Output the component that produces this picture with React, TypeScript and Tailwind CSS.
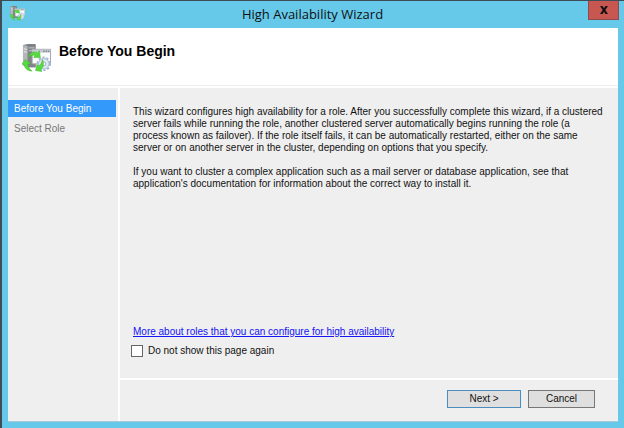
import React from "react";

function ClusterIcon({ className }: { className: string }) {
  return (
    <svg viewBox="0 0 30 30" className={className} aria-hidden="true">
      <path d="M1 1 6 0h8v24H6l-5-2z" fill="#7d8084" />
      <path d="M1 1l5 1v22l-5-2z" fill="#b4b7ba" />
      <path d="M6 2l8-1v23H6z" fill="#808387" />
      <path d="M7 4h6M7 7h6" stroke="#c9cccf" strokeWidth="1" />
      <path d="M2 5l3 .5M2 8l3 .5" stroke="#ebedee" strokeWidth="1" />
      <path d="M10.500 5.500h19v15h-19z" fill="#fbfcfd" stroke="#a2a6ab" />
      <path d="M11 6h18v3H11z" fill="#c6cbd2" />
      <path d="M22 7.500h1.500M24.500 7.500H26M27 7.500h1.200" stroke="#5c6570" />
      <circle cx="22.500" cy="20.500" r="6.500" fill="none" stroke="#a3b3c8" strokeWidth="2" strokeDasharray="2.200 1.880" />
      <circle cx="22.500" cy="20.500" r="5.500" fill="#dbe6f3" stroke="#a9bad0" />
      <circle cx="22.500" cy="20.500" r="2" fill="#fff" stroke="#9cadc2" />
      <path d="M6 14C8 9 12 7 16 9l2-2 1 7-7 0 1.500-2C11 11 9 11.500 6 14z" fill="#55dc3c" stroke="#3bb32b" strokeWidth=".5" />
      <path d="M0 21 3.500 16 9 20.500l-3 .2c.2 3 1.500 5 4.500 7.300-5 0-8-3-8.300-7z" fill="#55dc3c" stroke="#3bb32b" strokeWidth=".5" />
      <path d="M21 16c2 4 1.500 8-1.500 10.500l1 2-6.500-1 1.500-6.500 1.500 2c2.500-1.500 3.800-4 4-7z" fill="#55dc3c" stroke="#3bb32b" strokeWidth=".5" />
    </svg>
  );
}

export default function App() {
  return (
    <div className="flex min-h-screen flex-col border-l-2 border-t border-[#3f4c55] bg-[#66c9ea] font-['Liberation_Sans',Arial,sans-serif] text-[10px] leading-3 text-[#111]">
      <header className="grid h-[27px] grid-cols-[1fr_auto_1fr] items-start pl-1 pr-[5px]">
        <ClusterIcon className="ml-1 mt-[5px] size-[15px]" />
        <h1 className="mt-[3px] font-['Open_Sans',sans-serif] text-[13px] leading-5">High Availability Wizard</h1>
        <button type="button" aria-label="Close" className="flex h-[19px] w-[31px] items-center justify-center justify-self-end border border-t-0 border-[#8e4a4c] bg-[#c75750]">
          <svg viewBox="0 0 8 8" className="size-2" aria-hidden="true">
            <path d="M0 0h2.500L4 2.200 5.500 0H8L5.300 4 8 8H5.500L4 5.800 2.500 8H0l2.700-4z" fill="#111" />
          </svg>
        </button>
      </header>

      <main className="mx-1.5 mb-1.5 flex flex-1 flex-col border-b border-[#a9c9d5] bg-[#efefef]">
        <div className="flex h-[60px] items-start gap-2 border-b-2 border-white bg-white pl-3.5 shadow-[inset_0_-1px_0_#ededed]">
          <ClusterIcon className="mt-4 size-[29px]" />
          <h2 className="mt-[15px] text-[14px] font-bold leading-4 text-black">Before You Begin</h2>
        </div>

        <div className="flex flex-1">
          <nav className="w-[112px] shrink-0 border-r-2 border-white pt-3" aria-label="Wizard steps">
            <ol>
              <li aria-current="step" className="mr-0.5 bg-[#3399fb] py-0.5 pl-1.5 leading-[13px] text-white">Before You Begin</li>
              <li className="mt-1 pl-1.5 leading-4 text-[#777]">Select Role</li>
            </ol>
          </nav>

          <div className="flex min-w-0 flex-1 flex-col">
            <section className="flex flex-1 flex-col pb-[21px] pl-[13px] pr-3 pt-[18px]">
              <p>
                This wizard configures high availability for a role. After you successfully complete this wizard, if a clustered<br />
                server fails while running the role, another clustered server automatically begins running the role (a<br />
                process known as failover). If the role itself fails, it can be automatically restarted, either on the same<br />
                server or on another server in the cluster, depending on options that you specify.
              </p>
              <p className="mt-3">
                If you want to cluster a complex application such as a mail server or database application, see that<br />
                application's documentation for information about the correct way to install it.
              </p>
              <a href="#roles" className="mt-auto self-start text-[#1414f5] underline">More about roles that you can configure for high availability</a>
              <label className="-ml-0.5 mt-[7px] flex items-center gap-[5px] self-start">
                <input type="checkbox" className="size-3 appearance-none border border-[#666] bg-white checked:bg-[#3399fb]" />
                Do not show this page again
              </label>
            </section>

            <footer className="flex h-[43px] items-start justify-end gap-[7px] border-t-2 border-white pr-[23px] pt-2.5">
              <button type="button" className="h-[18px] w-[74px] border border-[#4c8dc0] bg-[#dfdfdf]">Next &gt;</button>
              <button type="button" className="h-[18px] w-[67px] border border-[#777] bg-[#dfdfdf]">Cancel</button>
            </footer>
          </div>
        </div>
      </main>
    </div>
  );
}
